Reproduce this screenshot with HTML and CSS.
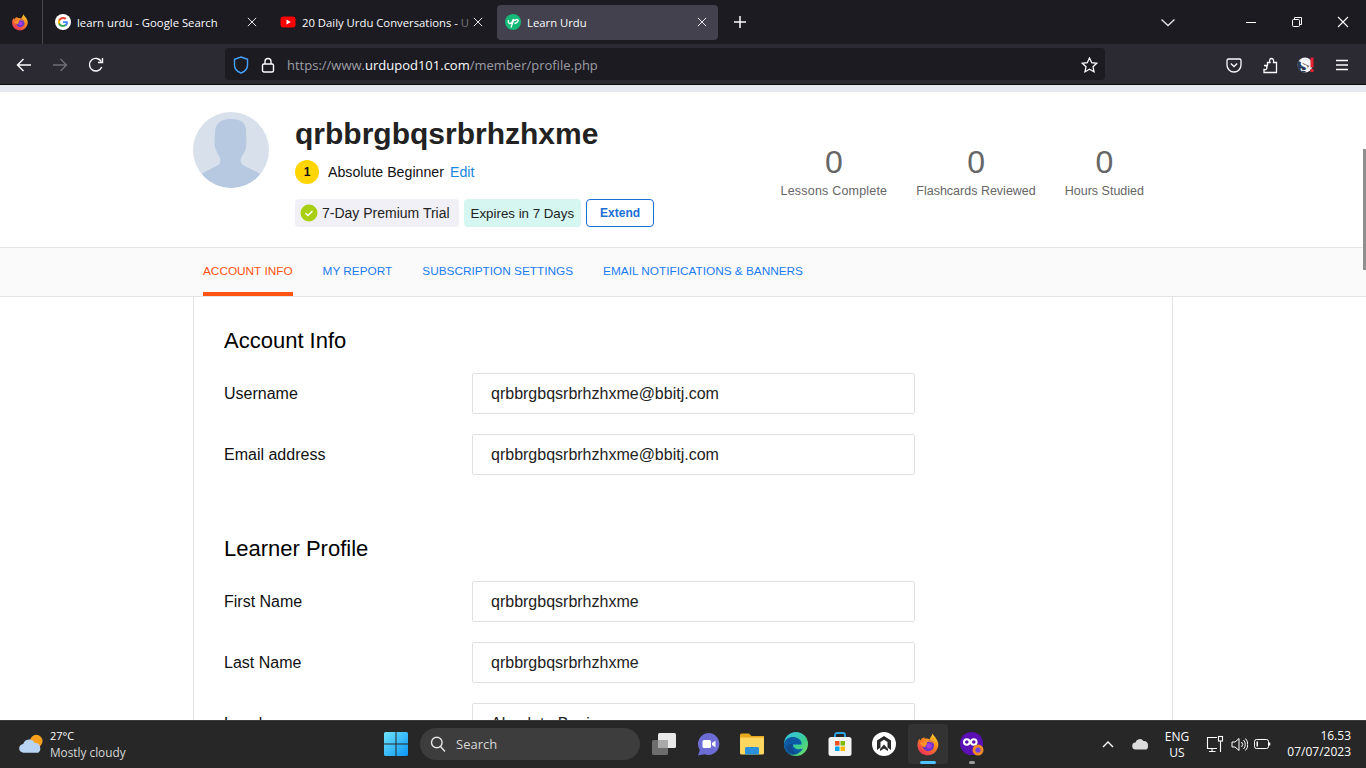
FILE: index.html
```html
<!DOCTYPE html>
<html lang="en">
<head>
    <meta charset="UTF-8">
    <meta name="viewport" content="width=device-width, initial-scale=1.0">
    <title>Learn Urdu</title>
    <link rel="stylesheet" href="styles.css">
</head>
<body>

    <svg class="sprites" width="0" height="0">
        <defs>
            <linearGradient id="ffOuter" x1="0.8" y1="0" x2="0.2" y2="1">
                <stop offset="0" stop-color="#ffd12e"/>
                <stop offset="0.4" stop-color="#ff8a1c"/>
                <stop offset="1" stop-color="#ec2a5c"/>
            </linearGradient>
        </defs>
        <symbol id="firefox" viewBox="0 0 32 32">
            <path d="M22 2c1 3 5 5 7 11 1 3 1 6 0 8-2 6-7 10-13 10C8 31 2 25 2 17.500 2 14 3 11 4.500 9c.3 1 .8 1.700 1.500 2.200C7 9 9 7.500 12 7c-.5.500-1 1.200-1 2 3-.5 5-.5 7 1 1-3 3-4 4-8z" fill="url(#ffOuter)"/>
            <circle cx="16.500" cy="18" r="7.500" fill="#6a35c9"/>
            <path d="M5 14c2 0 3 0 4 1 1-3 5-5 8-4 3 .5 5.500 2.500 6.500 5-2-2-4-3-6-3-1.500 0-3 .5-3.500 1.500 1 .5 1 1.500.5 2-2 .5-2 2-1.500 3.500-2 .5-6-1-8-6z" fill="#ff9226"/>
            <circle cx="17.500" cy="18.500" r="3.400" fill="#a53be0"/>
        </symbol>
        <symbol id="close-x" viewBox="0 0 12 12">
            <path d="M1 1l10 10M11 1L1 11" stroke="currentColor" stroke-width="1.100" fill="none"/>
        </symbol>
    </svg>

    <div class="app">

        <div class="tabstrip">
            <div class="ff-button">
                <svg width="18" height="18"><use href="#firefox"/></svg>
            </div>
            <div class="tab">
                <svg class="favicon" viewBox="0 0 16 16">
                    <circle cx="8" cy="8" r="8" fill="#fff"/>
                    <path d="M12.900 8.200c0-.4 0-.7-.1-1H8v1.900h2.800c-.1.700-.5 1.200-1 1.600v1.300h1.600c1-.9 1.500-2.200 1.500-3.800z" fill="#4285f4"/>
                    <path d="M8 13c1.400 0 2.500-.5 3.400-1.200l-1.600-1.300c-.5.300-1 .5-1.800.5-1.300 0-2.500-.9-2.900-2.100H3.400v1.300C4.200 11.900 6 13 8 13z" fill="#34a853"/>
                    <path d="M5.100 8.900C4.900 8.300 4.900 7.700 5.100 7.100V5.800H3.400c-.6 1.400-.6 3 0 4.400z" fill="#fbbc05"/>
                    <path d="M8 5c.8 0 1.500.3 2 .8l1.500-1.500C10.600 3.500 9.400 3 8 3 6 3 4.200 4.100 3.400 5.800l1.700 1.300C5.500 5.900 6.700 5 8 5z" fill="#ea4335"/>
                </svg>
                <span class="tab-title">learn urdu - Google Search</span>
                <svg class="tab-close" width="10" height="10"><use href="#close-x"/></svg>
            </div>
            <div class="tab">
                <svg class="favicon" viewBox="0 0 16 16">
                    <rect x="0.500" y="2.500" width="15" height="11" rx="3" fill="#f00"/>
                    <path d="M6.500 5.500v5l4.300-2.500z" fill="#fff"/>
                </svg>
                <span class="tab-title">20 Daily Urdu Conversations - <span class="tab-fade">U</span></span>
                <svg class="tab-close" width="10" height="10"><use href="#close-x"/></svg>
            </div>
            <div class="tab tab-active">
                <svg class="favicon" viewBox="0 0 16 16">
                    <circle cx="8" cy="8" r="8" fill="#14b978"/>
                    <path d="M3.500 6c-.5 2 0 3.500 1.500 3.500S7.500 8 8 5.500M9 5l-3 8.500M9.500 7c1-1.500 3-2 3.500-1s-.5 3-3.500 3.500" stroke="#fff" stroke-width="1.300" fill="none"/>
                </svg>
                <span class="tab-title">Learn Urdu</span>
                <svg class="tab-close" width="10" height="10"><use href="#close-x"/></svg>
            </div>
            <svg class="new-tab" width="14" height="14" viewBox="0 0 14 14">
                <path d="M7 1v12M1 7h12" stroke="#fbfbfe" stroke-width="1.500"/>
            </svg>
            <svg class="tab-list" width="16" height="9" viewBox="0 0 16 9">
                <path d="M1.500 1.500L8 7.500l6.500-6" stroke="#e8e8ea" stroke-width="1.300" fill="none"/>
            </svg>
            <div class="win-controls">
                <div class="win-btn">
                    <svg width="12" height="12"><path d="M1 6.500h10" stroke="#fff"/></svg>
                </div>
                <div class="win-btn">
                    <svg width="12" height="12" fill="none" stroke="#fff"><rect x="1.500" y="3.500" width="7" height="7" rx="1"/><path d="M3.500 3V1.500h7v7H9"/></svg>
                </div>
                <div class="win-btn">
                    <svg width="12" height="12"><use href="#close-x"/></svg>
                </div>
            </div>
        </div>

        <div class="toolbar">
            <div class="nav-btn">
                <svg width="16" height="16" viewBox="0 0 16 16" fill="none" stroke="#fbfbfe" stroke-width="1.400"><path d="M15 8H1.500M7.500 2l-6 6 6 6"/></svg>
            </div>
            <div class="nav-btn">
                <svg width="16" height="16" viewBox="0 0 16 16" fill="none" stroke="#6f6e75" stroke-width="1.400"><path d="M1 8h13.500M8.500 2l6 6-6 6"/></svg>
            </div>
            <div class="nav-btn">
                <svg width="16" height="16" viewBox="0 0 16 16" fill="none" stroke="#fbfbfe" stroke-width="1.400"><path d="M13.700 10a6.300 6.300 0 1 1-.4-5.400"/><path d="M14.500 1v4.500H10"/></svg>
            </div>
            <div class="urlbar">
                <svg class="shield" width="16" height="18" viewBox="0 0 16 18" fill="none" stroke="#45a1ff" stroke-width="1.400"><path d="M8 1l6.500 2.300V9c0 4-3 6.800-6.500 8C4.500 15.800 1.500 13 1.500 9V3.300z"/></svg>
                <svg class="lock" width="14" height="16" viewBox="0 0 14 16" fill="none" stroke="#fbfbfe" stroke-width="1.400"><rect x="1.500" y="7" width="11" height="8" rx="1.500"/><path d="M4 7V4.500a3 3 0 0 1 6 0V7"/></svg>
                <div class="url"><span class="url-dim">https://www.</span>urdupod101.com<span class="url-dim">/member/profile.php</span></div>
                <svg width="17" height="16" viewBox="0 0 17 16" fill="none" stroke="#fbfbfe" stroke-width="1.300"><path d="M8.500 1l2.200 4.700 5 .6-3.700 3.400 1 5L8.500 12.300 4 14.700l1-5L1.300 6.300l5-.6z"/></svg>
            </div>
            <div class="toolbar-right">
                <div class="nav-btn">
                    <svg width="16" height="15" viewBox="0 0 16 15" fill="none" stroke="#fbfbfe" stroke-width="1.300"><path d="M2.500 1h11A1.500 1.500 0 0 1 15 2.500V7a7 7 0 0 1-14 0V2.500A1.500 1.500 0 0 1 2.500 1z"/><path d="M4.800 5.500L8 8.500l3.200-3"/></svg>
                </div>
                <div class="nav-btn">
                    <svg width="16" height="17" viewBox="0 0 16 17" fill="none" stroke="#fbfbfe" stroke-width="1.300"><path d="M2 8.500h3.500V5.500H8C7 3 8 1.500 9.500 1.500S12 3 11.500 5.500h3v10H2v-3c2 .5 3-.5 3-2s-1-2-3-2z"/></svg>
                </div>
                <div class="nav-btn">
                    <svg width="18" height="18" viewBox="0 0 18 18">
                        <circle cx="8" cy="9" r="7.500" fill="#f1f1f3"/>
                        <path d="M8 16.500A7.500 7.500 0 0 1 1.500 5L12 10z" fill="#2d3a55"/>
                        <text x="3" y="14.500" class="ext-letter">S</text>
                        <rect x="13.500" y="1.500" width="3" height="10" fill="#e8202f"/>
                        <rect x="13.500" y="13" width="3" height="3" fill="#e8202f"/>
                    </svg>
                </div>
                <div class="nav-btn">
                    <svg width="14" height="12" viewBox="0 0 14 12" stroke="#fbfbfe" stroke-width="1.300"><path d="M1 1.500h12M1 6h12M1 10.500h12"/></svg>
                </div>
            </div>
        </div>

        <div class="viewport">
            <div class="page-strip"></div>

            <div class="profile-head">
                <div class="profile-left">
                    <svg class="avatar" width="76" height="76" viewBox="0 0 76 76">
                        <defs><clipPath id="avatarClip"><circle cx="38" cy="38" r="38"/></clipPath></defs>
                        <circle cx="38" cy="38" r="38" fill="#d7e0eb"/>
                        <path clip-path="url(#avatarClip)" d="M38 7c-11 0-16 5-16 14 0 4-1 9 0 14 1 3 2 6 4 9 2 3 2 7-1 9-4 3-11 5-16 9l-3 14h64l-3-14c-5-4-13-6-17-9-3-2-3-6-1-9 2-3 4-6 4-9 1-5 0-10 0-14C54 12 49 7 38 7z" fill="#b6c9e0"/>
                    </svg>
                    <div class="profile-info">
                        <h1 class="username">qrbbrgbqsrbrhzhxme</h1>
                        <div class="level-row">
                            <span class="level-badge">1</span>
                            <span class="level-name">Absolute Beginner</span>
                            <a class="edit-link">Edit</a>
                        </div>
                        <div class="chip-row">
                            <span class="chip chip-trial">
                                <svg width="18" height="18" viewBox="0 0 18 18">
                                    <circle cx="9" cy="9" r="8.500" fill="#a8cf12"/>
                                    <path d="M5.500 9.200l2.500 2.300 4.500-4.500" stroke="#fff" stroke-width="1.500" fill="none"/>
                                </svg>
                                7-Day Premium Trial
                            </span>
                            <span class="chip chip-expires">Expires in 7 Days</span>
                            <a class="btn-extend">Extend</a>
                        </div>
                    </div>
                </div>
                <div class="stats">
                    <div class="stat">
                        <div class="stat-num">0</div>
                        <div class="stat-label">Lessons Complete</div>
                    </div>
                    <div class="stat">
                        <div class="stat-num">0</div>
                        <div class="stat-label">Flashcards Reviewed</div>
                    </div>
                    <div class="stat">
                        <div class="stat-num">0</div>
                        <div class="stat-label">Hours Studied</div>
                    </div>
                </div>
            </div>

            <div class="subnav">
                <a class="subnav-link subnav-active">ACCOUNT INFO</a>
                <a class="subnav-link">MY REPORT</a>
                <a class="subnav-link">SUBSCRIPTION SETTINGS</a>
                <a class="subnav-link">EMAIL NOTIFICATIONS &amp; BANNERS</a>
            </div>

            <div class="card">
                <h2 class="card-title">Account Info</h2>
                <div class="form-row">
                    <label class="form-label">Username</label>
                    <div class="form-field">qrbbrgbqsrbrhzhxme@bbitj.com</div>
                </div>
                <div class="form-row">
                    <label class="form-label">Email address</label>
                    <div class="form-field">qrbbrgbqsrbrhzhxme@bbitj.com</div>
                </div>

                <h2 class="card-title card-title-second">Learner Profile</h2>
                <div class="form-row">
                    <label class="form-label">First Name</label>
                    <div class="form-field">qrbbrgbqsrbrhzhxme</div>
                </div>
                <div class="form-row">
                    <label class="form-label">Last Name</label>
                    <div class="form-field">qrbbrgbqsrbrhzhxme</div>
                </div>
                <div class="form-row">
                    <label class="form-label">Level</label>
                    <div class="form-field">Absolute Beginner</div>
                </div>
            </div>

            <div class="scroll-thumb"></div>
        </div>

        <div class="taskbar">
            <div class="weather">
                <svg width="27" height="24" viewBox="0 0 28 24">
                    <circle cx="19" cy="9" r="6.500" fill="#f7a01d"/>
                    <path d="M6 21a4.500 4.500 0 0 1-.6-9A6.500 6.500 0 0 1 17.500 11 4.800 4.800 0 0 1 23 16a4.700 4.700 0 0 1-2 5z" fill="#b9d4f2"/>
                </svg>
                <div class="weather-text">
                    <div>27°C</div>
                    <div class="weather-sub">Mostly cloudy</div>
                </div>
            </div>

            <svg class="win-logo" width="24" height="24" viewBox="0 0 24 24">
                <defs>
                    <linearGradient id="winBlue" x1="0" y1="0" x2="1" y2="1">
                        <stop offset="0" stop-color="#6ee4fb"/>
                        <stop offset="1" stop-color="#0a94f5"/>
                    </linearGradient>
                </defs>
                <path d="M0 1.500A1.500 1.500 0 0 1 1.500 0h10v11.500H0zM12.500 0h10A1.500 1.500 0 0 1 24 1.500v10H12.500zM0 12.500h11.500V24h-10A1.500 1.500 0 0 1 0 22.500zM12.500 12.500H24v10a1.500 1.500 0 0 1-1.500 1.500h-10z" fill="url(#winBlue)"/>
            </svg>

            <div class="search-pill">
                <svg width="16" height="16" viewBox="0 0 16 16" fill="none" stroke="#e6e6e6" stroke-width="1.400"><circle cx="6.800" cy="6.500" r="5.300"/><path d="M10.500 10.500l4.500 5"/></svg>
                <span>Search</span>
            </div>

            <div class="task-icons">
                <div class="task-icon">
                    <svg width="26" height="24" viewBox="0 0 26 24">
                        <rect x="1" y="8" width="16" height="15" rx="1.500" fill="#6d6d6d"/>
                        <rect x="7" y="1" width="18" height="15" rx="1.500" fill="#e9e9e9"/>
                        <rect x="7" y="8" width="10" height="8" fill="#a9a9a9"/>
                    </svg>
                </div>
                <div class="task-icon">
                    <svg width="24" height="24" viewBox="0 0 24 24">
                        <path d="M12.500 1a11 11 0 1 1-4 21.300L2 23.500l1.800-5.500A11 11 0 0 1 12.500 1z" fill="#6c6cd4"/>
                        <rect x="6.500" y="8" width="8.500" height="8" rx="1.500" fill="#fff"/>
                        <path d="M16 11l3.500-2.500v7L16 13z" fill="#fff"/>
                    </svg>
                </div>
                <div class="task-icon">
                    <svg width="24" height="22" viewBox="0 0 24 22">
                        <path d="M0 2a1.500 1.500 0 0 1 1.500-1.500H9L11.500 3H24v3H0z" fill="#e8a91f"/>
                        <path d="M0 4.500h24V20a1.500 1.500 0 0 1-1.500 1.500h-21A1.500 1.500 0 0 1 0 20z" fill="#fdd660"/>
                        <rect x="5" y="14" width="14" height="7.500" rx="1.500" fill="#2c8fd9"/>
                    </svg>
                </div>
                <div class="task-icon">
                    <svg width="24" height="24" viewBox="0 0 24 24">
                        <defs>
                            <linearGradient id="edgeGreen" x1="0" y1="0" x2="1" y2="1">
                                <stop offset="0" stop-color="#35c1f1"/>
                                <stop offset="0.600" stop-color="#3ccf8e"/>
                                <stop offset="1" stop-color="#7ce05a"/>
                            </linearGradient>
                        </defs>
                        <circle cx="12" cy="12" r="12" fill="url(#edgeGreen)"/>
                        <path d="M0 12C1 6 7 4 12 5.500c4 1.200 6 4 5.500 7H9c0 4 5 6 10 4-3 5-8 7-12 6C2 21 0 17 0 12z" fill="#0c59a4"/>
                        <path d="M9 12.500c-2 4 0 8 5 9.500-5 1-10-1-12-6 1-3 4-5 7-3.500z" fill="#114a8b"/>
                    </svg>
                </div>
                <div class="task-icon">
                    <svg width="24" height="24" viewBox="0 0 24 24">
                        <path d="M7 6V3a2 2 0 0 1 2-2h6a2 2 0 0 1 2 2v3" fill="none" stroke="#29a8e8" stroke-width="1.800"/>
                        <rect x="0.500" y="5" width="23" height="19" rx="2.500" fill="#f4f4f4"/>
                        <rect x="7" y="9" width="4.500" height="4.500" fill="#f25022"/>
                        <rect x="12.500" y="9" width="4.500" height="4.500" fill="#7fba00"/>
                        <rect x="7" y="14.500" width="4.500" height="4.500" fill="#00a4ef"/>
                        <rect x="12.500" y="14.500" width="4.500" height="4.500" fill="#ffb900"/>
                    </svg>
                </div>
                <div class="task-icon">
                    <svg width="24" height="24" viewBox="0 0 24 24">
                        <circle cx="12" cy="12" r="12" fill="#fff"/>
                        <path d="M5 18V8.500L12 4l7 4.500V18l-3.500-2.500V10L12 7.800 8.500 10v5.500z" fill="#2a2a2a"/>
                        <path d="M12 12.500l4 4.500v2l-4-2.500L8 19v-2z" fill="#2a2a2a"/>
                    </svg>
                </div>
                <div class="task-icon task-icon-active">
                    <svg width="24" height="24"><use href="#firefox"/></svg>
                    <span class="task-underline"></span>
                </div>
                <div class="task-icon">
                    <svg width="24" height="24" viewBox="0 0 24 24">
                        <circle cx="11.500" cy="11.500" r="11.500" fill="#5a10b4"/>
                        <path d="M4 10a2.800 2.800 0 0 1 5.600 0 2.800 2.800 0 0 1-5.600 0zM11 10a2.800 2.800 0 0 1 5.600 0 2.800 2.800 0 0 1-5.600 0z" fill="none" stroke="#fff" stroke-width="2"/>
                        <circle cx="18" cy="18" r="5.500" fill="#f08a24"/>
                        <circle cx="18" cy="18" r="2.600" fill="#7542e5"/>
                    </svg>
                    <span class="task-dot"></span>
                </div>
            </div>

            <div class="tray">
                <svg width="12" height="8" viewBox="0 0 12 8" fill="none" stroke="#fff" stroke-width="1.400"><path d="M1 7l5-5 5 5"/></svg>
                <svg class="tray-cloud" width="17" height="12" viewBox="0 0 17 12"><path d="M4 11.500a3.500 3.500 0 0 1-.5-7A4.500 4.500 0 0 1 11.500 3 4 4 0 0 1 16 7.500a4 4 0 0 1-1.500 4z" fill="#dcdcdc"/></svg>
                <div class="tray-lang">ENG<br>US</div>
                <svg class="tray-net" width="18" height="18" viewBox="0 0 18 18" fill="none" stroke="#fff" stroke-width="1.100"><path d="M11 13.500H1.500V2.500H11M6 13.500V16.500M3 16.500h6.500M14.500 6v11"/><rect x="12.500" y="1.500" width="4" height="4.500"/></svg>
                <svg class="tray-vol" width="17" height="15" viewBox="0 0 17 15" fill="none" stroke="#fff" stroke-width="1"><path d="M1 5v5h3l4 3.500v-12L4 5zM10.500 5a3.500 3.500 0 0 1 0 5M12.500 3a6.500 6.500 0 0 1 0 9M14.500 1.500a9 9 0 0 1 0 12"/></svg>
                <svg class="tray-bat" width="17" height="10" viewBox="0 0 17 10" fill="none" stroke="#fff" stroke-width="1"><rect x="0.500" y="0.500" width="14" height="9" rx="2"/><path d="M15.500 3.500v3" stroke-width="1.500"/><rect x="2.500" y="2.500" width="1.500" height="5" fill="#fff" stroke="none"/></svg>
                <div class="tray-clock">16.53<br>07/07/2023</div>
            </div>
        </div>

    </div>

</body>
</html>
```

FILE: styles.css
```css
* {
    box-sizing: border-box;
}

body {
    margin: 0;
    font-family: "Liberation Sans", Arial, sans-serif;
    background-color: #fff;
}

.sprites {
    position: absolute;
}

.app {
    display: flex;
    flex-direction: column;
    height: 100vh;
    overflow: hidden;
}

/* browser chrome */
.tabstrip {
    display: flex;
    align-items: center;
    height: 44px;
    flex-shrink: 0;
    background-color: #1c1b22;
    color: #fbfbfe;
    font-family: "Open Sans", "Noto Sans", sans-serif;
    font-size: 11.3px;
}

.ff-button {
    display: flex;
    align-items: center;
    justify-content: center;
    width: 43px;
    height: 44px;
    padding-right: 3px;
    border-right: 1px solid #4a4950;
}

.tab {
    display: flex;
    align-items: center;
    width: 221px;
    height: 35px;
    margin-left: 4px;
    padding: 0 11px 0 8px;
    border-radius: 4px;
    margin-right: 4px;
}

.tab + .tab {
    margin-left: 0;
}

.tab-active {
    background-color: #42414d;
}

.favicon {
    width: 16px;
    height: 16px;
    flex-shrink: 0;
    margin-right: 6px;
}

.tab-title {
    flex: 1;
    white-space: nowrap;
}

.tab-fade {
    color: #77767d;
}

.tab-close {
    flex-shrink: 0;
    color: #fbfbfe;
    margin-left: 4px;
}

.new-tab {
    margin-left: 11px;
}

.tab-list {
    margin-left: 413px;
}

.win-controls {
    display: flex;
    margin-left: auto;
}

.win-btn {
    display: flex;
    align-items: center;
    justify-content: center;
    width: 46px;
    height: 44px;
    color: #fff;
}

.toolbar {
    display: flex;
    align-items: center;
    height: 41px;
    flex-shrink: 0;
    padding-left: 6px;
    background-color: #2b2a33;
    border-bottom: 1px solid #0c0c0d;
    color: #fbfbfe;
}

.nav-btn {
    display: flex;
    align-items: center;
    justify-content: center;
    width: 36px;
    height: 32px;
    padding-top: 2px;
}

.urlbar {
    display: flex;
    align-items: center;
    width: 880px;
    height: 32px;
    margin-left: 111px;
    padding: 2px 7px 0 8px;
    border-radius: 4px;
    background-color: #1c1b22;
}

.shield {
    margin-right: 12px;
}

.lock {
    margin-right: 12px;
}

.url {
    flex: 1;
    font-family: "Open Sans", "Noto Sans", sans-serif;
    font-size: 13px;
    color: #fbfbfe;
    white-space: nowrap;
}

.url-dim {
    color: #9e9ea5;
}

.toolbar-right {
    display: flex;
    margin-left: 111px;
}

.ext-letter {
    font-family: "Liberation Serif", serif;
    font-weight: bold;
    font-size: 15px;
    fill: #fff;
}

/* page */
.viewport {
    position: relative;
    flex: 1;
    min-height: 0;
    overflow: hidden;
    background-color: #fff;
}

.page-strip {
    height: 7px;
    background-color: #e6e9f2;
}

.scroll-thumb {
    position: absolute;
    top: 64px;
    right: 0;
    width: 3px;
    height: 121px;
    background-color: #8f8f8f;
}

.profile-head {
    display: flex;
    justify-content: space-between;
    height: 155px;
    padding: 20px 222px 0 193px;
}

.profile-left {
    display: flex;
    gap: 26px;
}

.avatar {
    flex-shrink: 0;
}

.username {
    margin: 0;
    font-size: 30px;
    line-height: 44px;
    font-weight: bold;
    color: #222;
}

.level-row {
    display: flex;
    align-items: center;
    margin-top: 4px;
    height: 24px;
    font-size: 14.2px;
    color: #111;
}

.level-badge {
    display: flex;
    align-items: center;
    justify-content: center;
    width: 24px;
    height: 24px;
    margin-right: 9px;
    border-radius: 50%;
    background-color: #ffd500;
    font-size: 12px;
    font-weight: bold;
}

.edit-link {
    margin-left: 6px;
    color: #1a87e0;
}

.chip-row {
    display: flex;
    gap: 5px;
    margin-top: 15px;
    font-size: 14px;
    color: #222;
}

.chip {
    display: flex;
    align-items: center;
    height: 28px;
    padding: 0 8px;
    border-radius: 4px;
}

.chip svg {
    margin-right: 4px;
    margin-left: -3px;
}

.chip-trial {
    padding-right: 9px;
    background-color: #f0f0f6;
}

.chip-expires {
    padding: 0 7px;
    background-color: #d6f6f1;
    font-size: 13.3px;
}

.btn-extend {
    display: flex;
    align-items: center;
    justify-content: center;
    width: 68px;
    height: 28px;
    border: 1px solid #1a6fd4;
    border-radius: 4px;
    font-size: 12px;
    font-weight: bold;
    color: #1a6fd4;
}

.stats {
    display: flex;
    gap: 29px;
    margin-top: 32px;
    text-align: center;
    color: #666;
}

.stat-num {
    font-size: 32px;
    line-height: 36px;
}

.stat-label {
    margin-top: 3px;
    font-size: 12.5px;
    line-height: 16px;
}

.stat:first-child .stat-label {
    letter-spacing: 0.2px;
}

.subnav {
    display: flex;
    gap: 30px;
    height: 50px;
    padding-left: 203px;
    background-color: #fafafa;
    border-top: 1px solid #e4e4e4;
    border-bottom: 1px solid #e4e4e4;
}

.subnav-link {
    display: flex;
    align-items: center;
    height: 48px;
    padding-bottom: 3px;
    font-size: 11.8px;
    color: #1a7bf0;
}

.subnav-active {
    color: #ff5310;
    border-bottom: 4px solid #ff5310;
    padding-top: 1px;
    padding-bottom: 0;
}

.card {
    width: 980px;
    margin-left: 193px;
    padding: 29px 30px 40px;
    border-left: 1px solid #e4e4e4;
    border-right: 1px solid #e4e4e4;
}

.card-title {
    margin: 0 0 18px;
    font-size: 22px;
    line-height: 29px;
    font-weight: normal;
    color: #000;
}

.card-title-second {
    margin-top: 59px;
}

.form-row {
    display: flex;
    align-items: center;
    margin-bottom: 20px;
}

.form-label {
    width: 248px;
    font-size: 16px;
    color: #111;
}

.form-field {
    display: flex;
    align-items: center;
    width: 443px;
    height: 41px;
    padding-left: 18px;
    border: 1px solid #e0e0e0;
    border-radius: 2px;
    font-size: 16px;
    color: #222;
}

/* windows taskbar */
.taskbar {
    display: flex;
    align-items: center;
    height: 48px;
    flex-shrink: 0;
    padding-left: 18px;
    background-color: #272727;
    box-shadow: inset 0 1px 0 #3c3c3c;
    color: #fff;
    font-family: "Open Sans", "Noto Sans", sans-serif;
}

.weather {
    display: flex;
    align-items: center;
    gap: 5px;
    width: 366px;
    flex-shrink: 0;
    font-size: 11px;
}

.weather-text {
    line-height: 16px;
}

.weather-sub {
    font-size: 11.8px;
    color: #d8d8d8;
}

.win-logo {
    flex-shrink: 0;
}

.search-pill {
    display: flex;
    align-items: center;
    flex-shrink: 0;
    gap: 10px;
    width: 220px;
    height: 32px;
    margin-left: 12px;
    padding-left: 10px;
    border-radius: 16px;
    background-color: #3d3d3d;
    font-size: 13px;
    color: #d8d8d8;
}

.task-icons {
    display: flex;
    flex-shrink: 0;
    margin-left: 2px;
}

.task-icon {
    position: relative;
    display: flex;
    align-items: center;
    justify-content: center;
    width: 44px;
    height: 40px;
}

.task-icon-active {
    width: 40px;
    margin: 0 2px;
    border-radius: 4px;
    background-color: #333;
}

.task-underline {
    position: absolute;
    bottom: 0;
    left: 12px;
    width: 16px;
    height: 3px;
    border-radius: 2px;
    background-color: #4cc2ff;
}

.task-dot {
    position: absolute;
    bottom: 0;
    left: 19px;
    width: 6px;
    height: 3px;
    border-radius: 2px;
    background-color: #9a9a9a;
}

.tray {
    display: flex;
    align-items: center;
    flex-shrink: 0;
    margin-left: 108px;
    font-size: 12px;
}

.tray-cloud {
    margin-left: 18px;
}

.tray-lang {
    width: 30px;
    margin-left: 13px;
    padding-top: 1px;
    line-height: 16px;
    text-align: center;
}

.tray-net {
    margin-left: 14px;
}

.tray-vol {
    margin-left: 7px;
}

.tray-bat {
    margin-left: 6px;
}

.tray-clock {
    width: 70px;
    margin-left: 10px;
    line-height: 16px;
    text-align: right;
    font-size: 12px;
}
```
